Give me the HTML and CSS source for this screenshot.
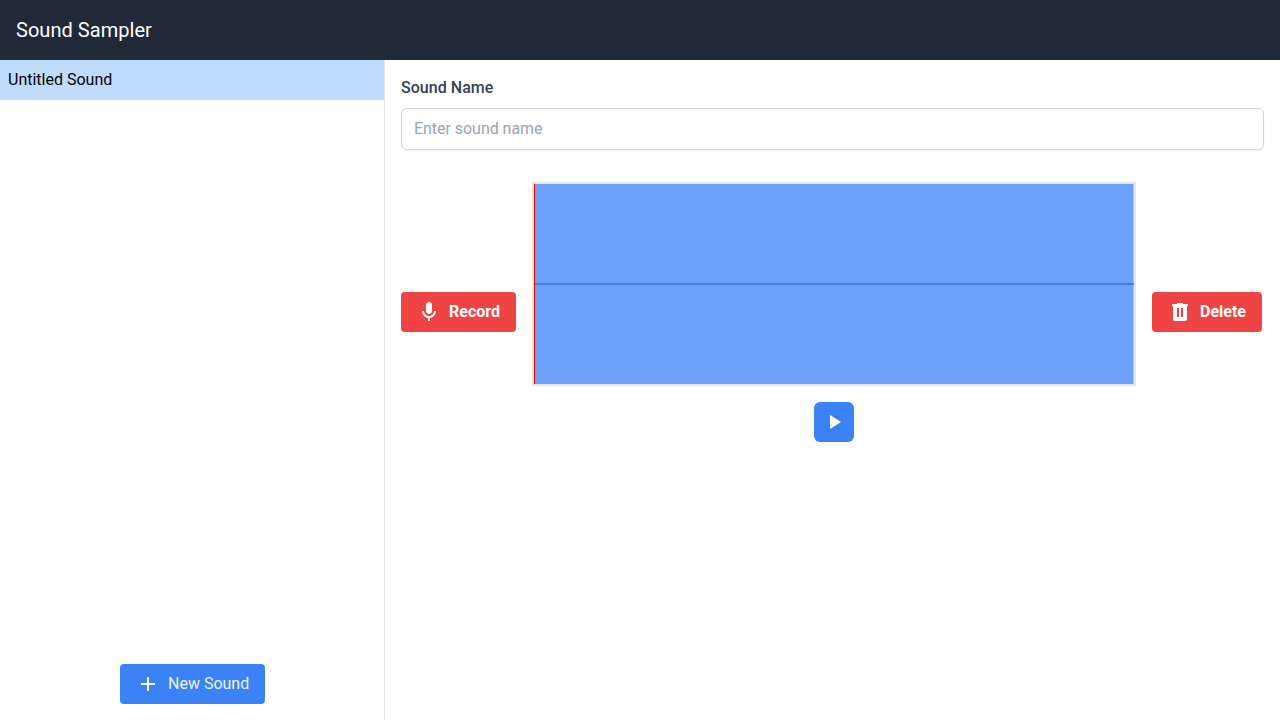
FILE: index.html
```html
<!DOCTYPE html>
<html lang="en">
<head>
<meta charset="utf-8">
<title>Sound Sampler</title>
<link rel="stylesheet" href="styles.css">
</head>
<body>
<header class="header"><h1 class="title">Sound Sampler</h1></header>
<div class="main">
  <aside class="sidebar">
    <ul class="sounds"><li class="sound">Untitled Sound</li></ul>
    <div class="sidebar-footer">
      <button class="btn btn-new"><svg class="icon" viewBox="0 0 24 24"><path d="M19 13h-6v6h-2v-6H5v-2h6V5h2v6h6z"/></svg>New Sound</button>
    </div>
  </aside>
  <main class="editor">
    <label class="label" for="name">Sound Name</label>
    <input class="input" id="name" type="text" placeholder="Enter sound name">
    <div class="sampler">
      <button class="btn btn-red"><svg class="icon" viewBox="0 0 24 24"><path d="M12 14c1.66 0 3-1.34 3-3V5c0-1.66-1.34-3-3-3S9 3.340 9 5v6c0 1.660 1.340 3 3 3zm5-3c0 2.760-2.240 5-5 5s-5-2.240-5-5H5c0 3.530 2.610 6.430 6 6.920V21h2v-3.080c3.390-.49 6-3.390 6-6.920h-2z"/></svg>Record</button>
      <div class="player">
        <div class="wave"><svg class="canvas" viewBox="0 0 600 200"><rect class="region" width="599" height="200"/><rect class="region-edge" x="599" width="1" height="200"/><rect class="midline" y="99" width="600" height="2"/><rect class="playhead" width="1" height="200"/></svg></div>
        <button class="play" aria-label="Play"><svg class="icon" viewBox="0 0 24 24"><path d="M8 5v14l11-7z"/></svg></button>
      </div>
      <button class="btn btn-red"><svg class="icon" viewBox="0 0 24 24"><path fill-rule="evenodd" d="M7 21q-.825 0-1.412-.587Q5 19.825 5 19V6H4V4h5V3h6v1h5v2h-1v13q0 .825-.587 1.413Q17.825 21 17 21zm2-4h2V8H9zm4 0h2V8h-2z"/></svg>Delete</button>
    </div>
  </main>
</div>
</body>
</html>
```
FILE: styles.css
```css
* { box-sizing: border-box; margin: 0; padding: 0; }
body {
  height: 100vh;
  display: flex;
  flex-direction: column;
  overflow: hidden;
  background: #fff;
  color: #000;
  font: 16px/24px Roboto, sans-serif;
}
.header { padding: 16px; background: #1f2937; color: #fff; }
.title { font-size: 20px; line-height: 28px; font-weight: 400; letter-spacing: .04px; }
.main { flex: 1; display: flex; }
.sidebar { width: 385px; display: flex; flex-direction: column; border-right: 1px solid #e5e7eb; }
.sounds { flex: 1; list-style: none; }
.sound { padding: 8px; background: #bfdbfe; }
.sidebar-footer { display: flex; justify-content: center; padding: 16px 15px 16px 16px; }
.btn {
  display: flex;
  align-items: center;
  gap: 8px;
  height: 40px;
  padding: 8px 16px;
  border: 0;
  border-radius: 4px;
  color: #fff;
  font: inherit;
  white-space: nowrap;
}
.btn-new { width: 145px; background: #3b82f6; color: #eff6ff; }
.btn-new .icon { color: #fff; }
.btn-red { background: #ef4444; font-weight: 700; }
.icon { width: 24px; height: 24px; flex: none; fill: currentColor; }
.editor { flex: 1; padding: 16px; }
.label { display: block; margin-bottom: 8px; color: #374151; font-weight: 500; letter-spacing: .04px; }
.input {
  display: block;
  width: 100%;
  height: 42px;
  padding: 7px 12px 9px;
  border: 1px solid #d1d5db;
  border-radius: 6px;
  box-shadow: 0 1px 2px rgba(0, 0, 0, .05);
  font: inherit;
  letter-spacing: -.04px;
}
.input::placeholder { color: #9ca3af; }
.sampler { display: flex; align-items: center; gap: 16px; margin-top: 32px; }
.player { display: flex; flex-direction: column; align-items: center; gap: 16px; }
.wave { border: 2px solid #e5e7eb; }
.canvas { display: block; width: 600px; height: 200px; }
.region { fill: #6ba1f9; }
.region-edge { fill: #a6c8fc; }
.midline { fill: #4a80d9; }
.playhead { fill: #f00; }
.play {
  display: flex;
  align-items: center;
  justify-content: center;
  width: 40px;
  height: 40px;
  border: 0;
  border-radius: 6px;
  background: #3b82f6;
  color: #fff;
}
```
